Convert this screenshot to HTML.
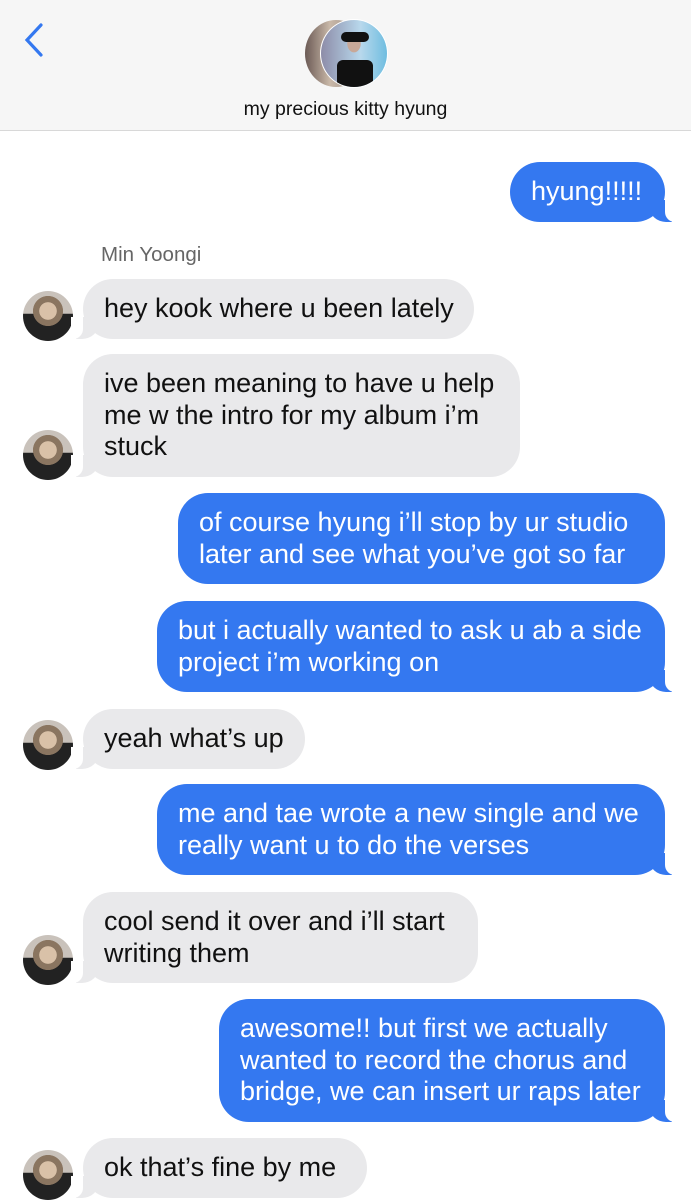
<!DOCTYPE html>
<html><head><meta charset="utf-8"><style>
*{margin:0;padding:0;box-sizing:border-box}
body{width:691px;height:1200px;overflow:hidden;background:#fff;font-family:"Liberation Sans",Helvetica,Arial,sans-serif;position:relative}
.hdr{position:absolute;left:0;top:0;width:691px;height:131px;background:#f6f6f6;border-bottom:1px solid #d8d8d8}
.title{position:absolute;top:98px;width:691px;text-align:center;font-size:19.5px;color:#111}
.b{position:absolute;font-size:27px;line-height:31.5px;padding:14px 0 14px 21px;border-radius:30px;white-space:nowrap}
.g{background:#e9e9eb;color:#111;left:83px}
.u{background:#3478f0;color:#fff;right:26px}
.g.t::before{content:"";position:absolute;left:-7px;bottom:0;width:22px;height:22px;background:#e9e9eb;border-bottom-right-radius:16px 14px}
.g.t::after{content:"";position:absolute;left:-12px;bottom:0;width:12px;height:22px;background:#fff;border-bottom-right-radius:10px}
.u.t::before{content:"";position:absolute;right:-7px;bottom:0;width:22px;height:22px;background:#3478f0;border-bottom-left-radius:16px 14px}
.u.t::after{content:"";position:absolute;right:-12px;bottom:0;width:12px;height:22px;background:#fff;border-bottom-left-radius:10px}
.av{position:absolute;left:23px;width:50px;height:50px;border-radius:50%;background:radial-gradient(circle at 50% 40%,#d9c1a8 0 22%,#8a7560 23% 38%,transparent 39%),linear-gradient(#c9c2bb 0 45%,#222 46%);}
.name{position:absolute;left:101px;top:243px;font-size:20.5px;color:#666}
</style></head><body>
<div class="hdr">
<svg style="position:absolute;left:22px;top:22px" width="24" height="36" viewBox="0 0 24 36"><path d="M19 3 L5 18 L19 33" fill="none" stroke="#3478f0" stroke-width="3.2" stroke-linecap="round"/></svg>
<div style="position:absolute;left:305px;top:20px;width:62px;height:67px;border-radius:50%;background:linear-gradient(90deg,#6b5a55,#c9b8a8 40%,#8b7f7a)"></div>
<div style="position:absolute;left:320px;top:19px;width:68px;height:69px;border-radius:50%;border:1.5px solid #fff;background:radial-gradient(ellipse at 50% 35%,#c8a898 0 14%,transparent 15%),linear-gradient(90deg,#8d8ca8,#b8d8ec 60%,#6fbde0);overflow:hidden"><div style="position:absolute;left:16px;top:40px;width:36px;height:30px;background:#111;border-radius:6px 6px 0 0"></div><div style="position:absolute;left:20px;top:12px;width:28px;height:10px;background:#111;border-radius:5px"></div></div>
<div class="title">my precious kitty hyung</div>
</div>

<div class="b u t" style="top:162px;width:155px">hyung!!!!!</div>
<div class="name">Min Yoongi</div>
<div class="av" style="top:291px"></div>
<div class="b g t" style="top:279px;width:391px">hey kook where u been lately</div>
<div class="av" style="top:430px"></div>
<div class="b g t" style="top:354px;width:437px">ive been meaning to have u help<br>me w the intro for my album i’m<br>stuck</div>
<div class="b u" style="top:493px;width:487px">of course hyung i’ll stop by ur studio<br>later and see what you’ve got so far</div>
<div class="b u t" style="top:601px;width:508px">but i actually wanted to ask u ab a side<br>project i’m working on</div>
<div class="av" style="top:720px"></div>
<div class="b g t" style="top:709px;width:222px">yeah what’s up</div>
<div class="b u t" style="top:784px;width:508px">me and tae wrote a new single and we<br>really want u to do the verses</div>
<div class="av" style="top:935px"></div>
<div class="b g t" style="top:892px;width:395px">cool send it over and i’ll start<br>writing them</div>
<div class="b u t" style="top:999px;width:446px">awesome!! but first we actually<br>wanted to record the chorus and<br>bridge, we can insert ur raps later</div>
<div class="av" style="top:1150px"></div>
<div class="b g t" style="top:1138px;width:284px">ok that’s fine by me</div>
</body></html>
